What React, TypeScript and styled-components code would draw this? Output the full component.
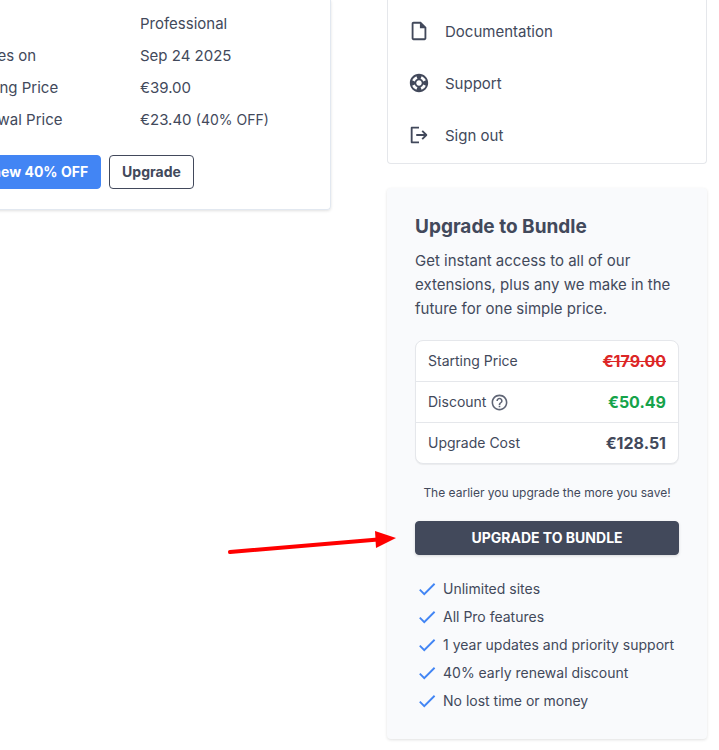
import React from "react";
import styled, { createGlobalStyle } from "styled-components";
import {
  MdCheck,
  MdHelpOutline,
  MdOutlineInsertDriveFile,
  MdSupport,
} from "react-icons/md";

const ink = "#42495b";
const line = "#e5e7eb";

const GlobalStyle = createGlobalStyle`
  *, *::before, *::after { box-sizing: border-box; }
  body {
    margin: 0;
    overflow-x: hidden;
    background: #fff;
    color: ${ink};
    font: 400 15px/24px "Inter", sans-serif;
  }
`;

const Page = styled.main`
  position: relative;
  display: flex;
  align-items: flex-start;
  gap: 56px;
  padding: 0 12px 10px 0;
  overflow: hidden;
`;

const LicenseCard = styled.section`
  flex: 1;
  min-width: 0;
  margin-left: -63px;
  padding: 8px 24px 20px;
  border: 1px solid #e2e8f0;
  border-top: 0;
  border-radius: 0 0 4px 4px;
  box-shadow: 0 1px 3px rgba(0, 0, 0, 0.12);
`;

const Details = styled.dl`
  display: grid;
  grid-template-columns: 178px 1fr;
  margin: 0 0 19px;
  line-height: 32px;
`;

const Term = styled.dt`
  grid-column: 1;
`;

const Detail = styled.dd`
  grid-column: 2;
  margin: 0;
`;

const Small = styled.span`
  font-size: 14px;
`;

const Actions = styled.div`
  display: flex;
  gap: 8px;
`;

const Button = styled.button<{ $kind: "primary" | "outline" | "dark" }>`
  height: 34px;
  padding: 0 12px;
  border: 1px solid ${(p) => (p.$kind === "primary" ? "#4285f4" : ink)};
  border-radius: 4px;
  background: ${(p) =>
    p.$kind === "primary" ? "#4285f4" : p.$kind === "dark" ? ink : "#fff"};
  color: ${(p) => (p.$kind === "outline" ? ink : "#fff")};
  font: 700 14px/20px "Inter", sans-serif;
  cursor: pointer;
  ${(p) =>
    p.$kind === "dark" &&
    "width: 100%; box-shadow: 0 1px 3px rgba(0, 0, 0, 0.14);"}
`;

const WideButton = styled(Button)`
  min-width: 139px;
  text-align: right;
`;

const Sidebar = styled.aside`
  flex: 0 0 320px;
  display: flex;
  flex-direction: column;
  gap: 24px;
`;

const Menu = styled.nav`
  padding: 5px 0 2px;
  border: 1px solid ${line};
  border-top: 0;
  border-radius: 0 0 4px 4px;
`;

const MenuLink = styled.a`
  display: flex;
  align-items: center;
  gap: 15px;
  height: 52px;
  padding: 0 20px;
  color: inherit;
  text-decoration: none;

  svg {
    width: 22px;
    height: 22px;
  }
`;

const MenuLabel = styled.span`
  padding-top: 2px;
`;

const Bundle = styled.section`
  padding: 25px 28px 24px;
  border-radius: 4px;
  background: #f9fafc;
  box-shadow: 0 1px 3px rgba(0, 0, 0, 0.12);
`;

const Title = styled.h2`
  margin: 0 0 8px;
  font-size: 19px;
  line-height: 28px;
  font-weight: 700;
`;

const Intro = styled.p`
  margin: 0 0 19px;
`;

const PriceFrame = styled.div`
  border: 1px solid ${line};
  border-radius: 8px;
  background: #fff;
  box-shadow: 0 1px 1px rgba(0, 0, 0, 0.06);
`;

const PriceTable = styled.table`
  width: 100%;
  border-collapse: separate;
  border-spacing: 0;

  tr > * {
    height: 40px;
  }

  tr + tr > * {
    height: 41px;
    border-top: 1px solid ${line};
  }
`;

const PriceLabel = styled.th`
  padding: 0 0 0 12px;
  font-size: 14px;
  line-height: 20px;
  font-weight: 400;
  text-align: left;
`;

const LabelRow = styled.span`
  display: flex;
  align-items: center;
  gap: 4px;
`;

const HelpButton = styled.button`
  display: flex;
  padding: 0;
  border: 0;
  background: none;
  color: #5f6575;
  cursor: help;
`;

const Price = styled.td<{ $tone?: string }>`
  padding: 0 12px 0 0;
  color: ${(p) => p.$tone || ink};
  font-size: 16px;
  font-weight: 700;
  text-align: right;
`;

const Note = styled.p`
  margin: 19px 0 18px;
  font-size: 12px;
  line-height: 20px;
  text-align: center;
`;

const Features = styled.ul`
  margin: 20px 0 0;
  padding: 0;
  list-style: none;
`;

const Feature = styled.li`
  display: flex;
  align-items: center;
  gap: 5px;
  padding-left: 1px;
  font-size: 14px;
  line-height: 28px;

  svg {
    flex: none;
    color: #4285f4;
  }
`;

const Arrow = styled.svg`
  position: absolute;
  left: 226px;
  top: 528px;
  pointer-events: none;
`;

const features = [
  "Unlimited sites",
  "All Pro features",
  "1 year updates and priority support",
  "40% early renewal discount",
  "No lost time or money",
];

function SignOutIcon() {
  return (
    <svg
      viewBox="0 0 24 24"
      fill="none"
      stroke="currentColor"
      strokeWidth="2"
      strokeLinejoin="round"
      aria-hidden="true"
    >
      <path d="M12 4H4V20H12" />
      <path d="M9 12H20M15.5 7.5L20 12L15.5 16.5" />
    </svg>
  );
}

export default function App() {
  return (
    <>
      <GlobalStyle />
      <Page>
        <LicenseCard>
          <Details>
            <Detail>Professional</Detail>
            <Term>Expires on</Term>
            <Detail>Sep 24 2025</Detail>
            <Term>Starting Price</Term>
            <Detail>€39.00</Detail>
            <Term>Renewal Price</Term>
            <Detail>
              €23.40 <Small>(40% OFF)</Small>
            </Detail>
          </Details>
          <Actions>
            <WideButton $kind="primary">Renew 40% OFF</WideButton>
            <Button $kind="outline">Upgrade</Button>
          </Actions>
        </LicenseCard>

        <Sidebar>
          <Menu aria-label="Account">
            <MenuLink href="#documentation">
              <MdOutlineInsertDriveFile />
              <MenuLabel>Documentation</MenuLabel>
            </MenuLink>
            <MenuLink href="#support">
              <MdSupport />
              <MenuLabel>Support</MenuLabel>
            </MenuLink>
            <MenuLink href="#sign-out">
              <SignOutIcon />
              <MenuLabel>Sign out</MenuLabel>
            </MenuLink>
          </Menu>

          <Bundle>
            <Title>Upgrade to Bundle</Title>
            <Intro>
              Get instant access to all of our extensions, plus any we make in
              the future for one simple price.
            </Intro>
            <PriceFrame>
              <PriceTable>
                <tbody>
                  <tr>
                    <PriceLabel scope="row">Starting Price</PriceLabel>
                    <Price $tone="#dc2626">
                      <s>€179.00</s>
                    </Price>
                  </tr>
                  <tr>
                    <PriceLabel scope="row">
                      <LabelRow>
                        Discount
                        <HelpButton aria-label="About the discount">
                          <MdHelpOutline size={19} />
                        </HelpButton>
                      </LabelRow>
                    </PriceLabel>
                    <Price $tone="#16a34a">€50.49</Price>
                  </tr>
                  <tr>
                    <PriceLabel scope="row">Upgrade Cost</PriceLabel>
                    <Price>€128.51</Price>
                  </tr>
                </tbody>
              </PriceTable>
            </PriceFrame>
            <Note>The earlier you upgrade the more you save!</Note>
            <Button $kind="dark">UPGRADE TO BUNDLE</Button>
            <Features>
              {features.map((text) => (
                <Feature key={text}>
                  <MdCheck size={22} />
                  {text}
                </Feature>
              ))}
            </Features>
          </Bundle>
        </Sidebar>

        <Arrow width="172" height="28" viewBox="0 0 172 28" aria-hidden="true">
          <path
            d="M4 24L152 11.5"
            stroke="#f00"
            strokeWidth="4"
            strokeLinecap="round"
          />
          <path d="M149 3L170 10L150 20Z" fill="#f00" />
        </Arrow>
      </Page>
    </>
  );
}
